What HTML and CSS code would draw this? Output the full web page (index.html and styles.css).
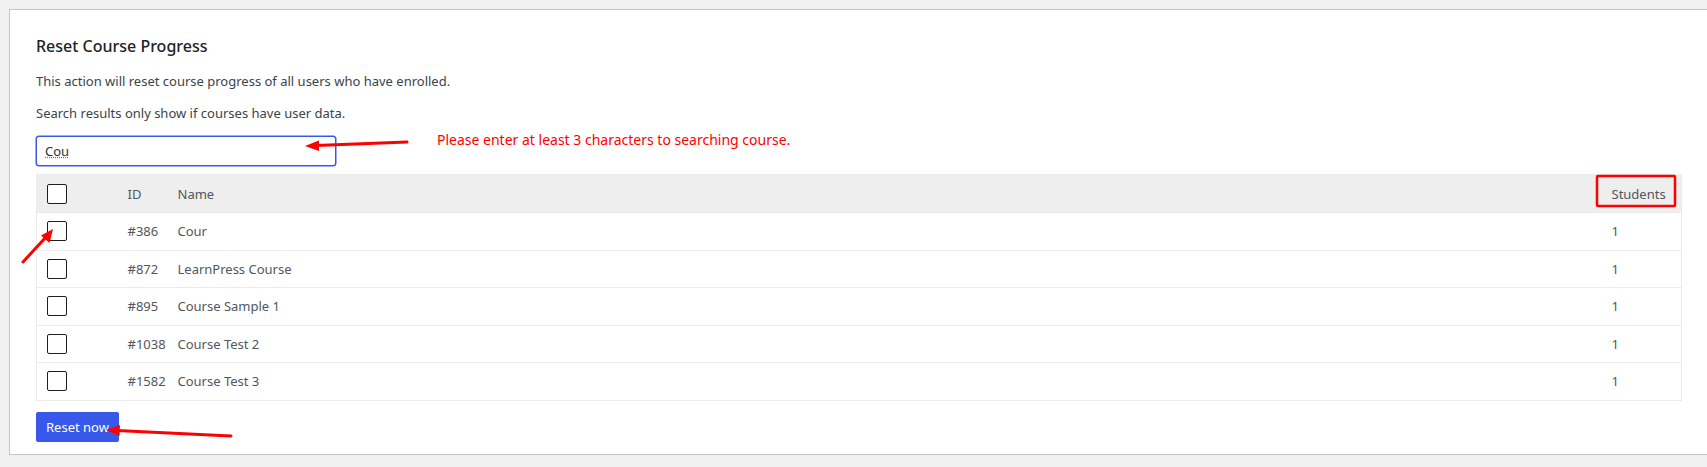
FILE: index.html
```html
<!DOCTYPE html>
<html>
<head>
  <title>Reset Course Progress</title>
  <meta charset="UTF-8">
  <link rel="stylesheet" href="styles.css">
</head>
<body>
  <div class="reset-card">
    <h2 class="reset-title">Reset Course Progress</h2>
    <p class="reset-note">This action will reset course progress of all users who have enrolled.</p>
    <p class="reset-note second">Search results only show if courses have user data.</p>
    <input type="text" class="search-input" value="Cou">
    <table class="course-table">
      <colgroup>
        <col class="col-check">
        <col class="col-id">
        <col>
        <col class="col-students">
      </colgroup>
      <thead>
        <tr>
          <th class="cell-check"><span class="check-box"></span></th>
          <th>ID</th>
          <th>Name</th>
          <th>Students</th>
        </tr>
      </thead>
      <tbody>
        <tr><td class="cell-check"><span class="check-box"></span></td><td>#386</td><td>Cour</td><td>1</td></tr>
        <tr><td class="cell-check"><span class="check-box"></span></td><td>#872</td><td>LearnPress Course</td><td>1</td></tr>
        <tr><td class="cell-check"><span class="check-box"></span></td><td>#895</td><td>Course Sample 1</td><td>1</td></tr>
        <tr><td class="cell-check"><span class="check-box"></span></td><td>#1038</td><td>Course Test 2</td><td>1</td></tr>
        <tr><td class="cell-check"><span class="check-box"></span></td><td>#1582</td><td>Course Test 3</td><td>1</td></tr>
      </tbody>
    </table>
    <button class="reset-button">Reset now</button>
  </div>

  <!-- screenshot annotations -->
  <span class="note-text">Please enter at least 3 characters to searching course.</span>
  <svg class="marks" width="1707" height="467" viewBox="0 0 1707 467">
    <g fill="#f00" stroke="#f00" stroke-linecap="round">
      <line x1="407" y1="142" x2="316" y2="145.6" stroke-width="3"/>
      <polygon points="305,146 319,140.5 319,151" stroke="none"/>
      <line x1="23" y1="262" x2="46" y2="237" stroke-width="3"/>
      <polygon points="53,229 49.5,243 41,235.5" stroke="none"/>
      <line x1="231" y1="436" x2="117" y2="430.6" stroke-width="3"/>
      <polygon points="106,430 120,425 119.5,436" stroke="none"/>
      <rect x="1597" y="176" width="78" height="30" rx="1" fill="none" stroke-width="2.5"/>
    </g>
  </svg>
</body>
</html>
```

FILE: styles.css
```css
body {
  margin: 0;
  background-color: #f0f0f1;
  font-family: "Noto Sans", Arial, sans-serif;
  overflow: hidden;
}
.reset-card {
  display: flex;
  flex-direction: column;
  align-items: flex-start;
  margin: 9px 0 0 9px;
  padding: 26px 25px 12px 26px;
  background-color: #fff;
  border: 1px solid #c3c4c7;
  border-right: none;
}
.reset-title {
  margin: 0;
  font-size: 16px;
  line-height: 20px;
  font-weight: 500;
  color: #1d2327;
}
.reset-note {
  margin: 15px 0 0;
  font-size: 13px;
  line-height: 20px;
  color: #3c434a;
}
.reset-note.second {
  margin-top: 12px;
}
.search-input {
  box-sizing: border-box;
  width: 300px;
  height: 30px;
  margin-top: 13px;
  padding: 0 8px;
  font-family: inherit;
  font-size: 13px;
  color: #2c3338;
  border: 1px solid #3858e9;
  border-radius: 3px;
  box-shadow: 0 0 0 0.5px #3858e9;
  outline: none;
  text-decoration: underline dotted #f33;
}
.course-table {
  width: 100%;
  margin-top: 8px;
  table-layout: fixed;
  border-collapse: collapse;
  border: 1px solid #ebebeb;
  font-size: 13px;
  color: #50575e;
}
.course-table .col-check {
  width: 81px;
}
.course-table .col-id {
  width: 50px;
}
.course-table .col-students {
  width: 80px;
}
.course-table th,
.course-table td {
  box-sizing: border-box;
  padding: 0 10px;
  white-space: nowrap;
}
.course-table th {
  height: 38px;
  font-weight: 400;
  text-align: left;
  background-color: #eee;
}
.course-table td {
  height: 37.5px;
  border-top: 1px solid #ebebeb;
}
.course-table .cell-check {
  line-height: 0;
}
.check-box {
  display: inline-block;
  box-sizing: border-box;
  width: 20px;
  height: 20px;
  border: 1px solid #1e1e1e;
  border-radius: 2px;
  background-color: #fff;
}
.reset-button {
  margin-top: 11px;
  padding: 0 10px;
  height: 30px;
  font-family: inherit;
  font-size: 13px;
  color: #fff;
  background-color: #3858e9;
  border: none;
  border-radius: 2px;
}
.note-text {
  position: absolute;
  left: 437px;
  top: 130px;
  font-size: 14px;
  line-height: 20px;
  color: #f00;
}
.marks {
  position: absolute;
  left: 0;
  top: 0;
  pointer-events: none;
}
```
